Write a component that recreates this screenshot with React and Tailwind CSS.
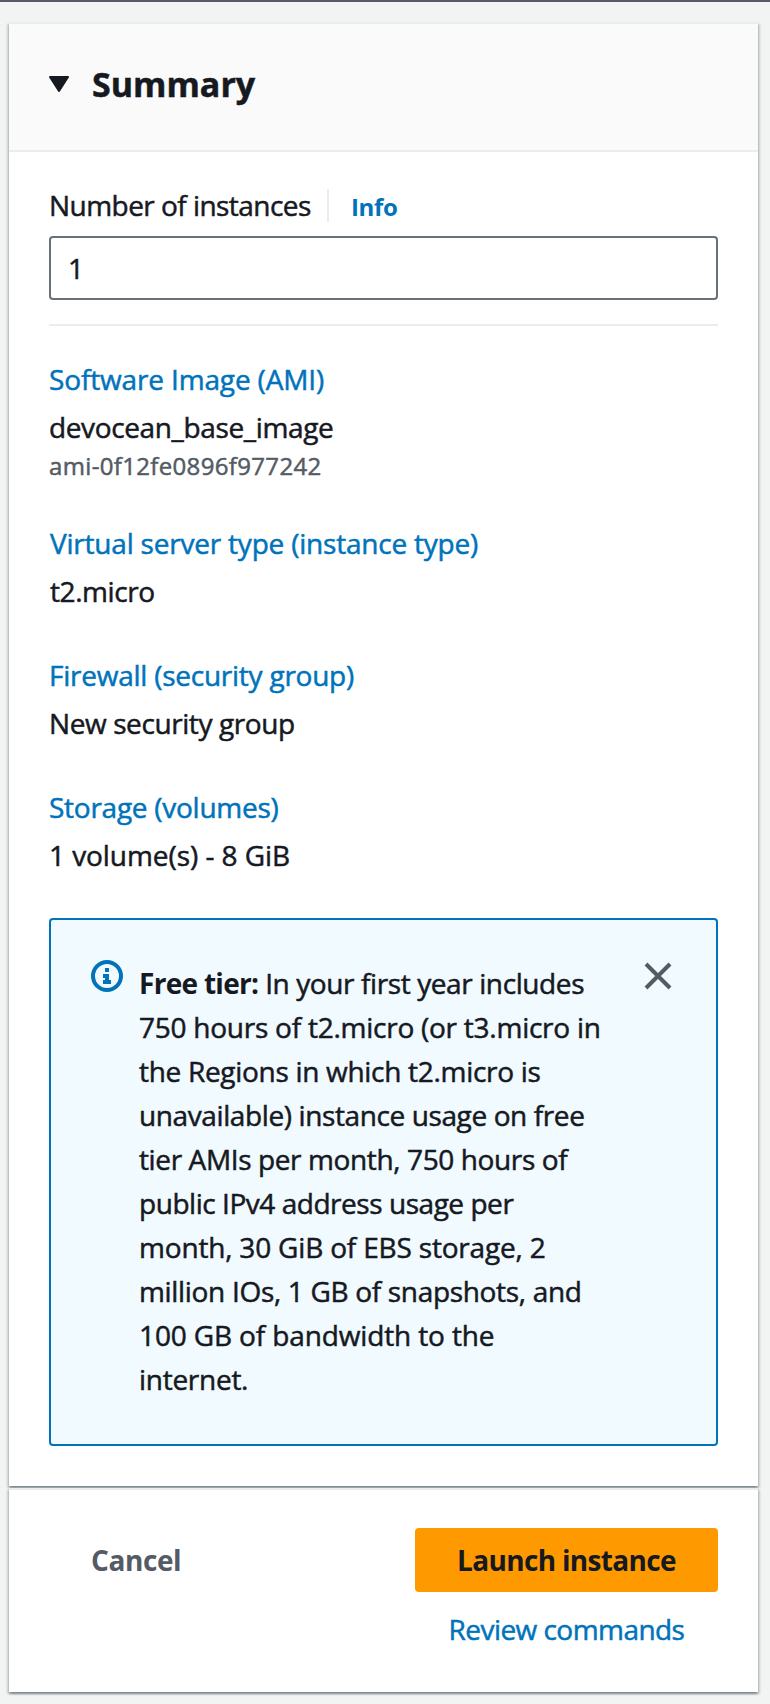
const sections = [
  {
    title: "Software Image (AMI)",
    titleClass: "tracking-[-0.145px]",
    value: "devocean_base_image",
    valueClass: "tracking-[-0.366px]",
    detail: "ami-0f12fe0896f977242",
  },
  {
    title: "Virtual server type (instance type)",
    titleClass: "tracking-[-0.21px] pl-px",
    value: "t2.micro",
    valueClass: "tracking-[-0.42px] pl-px",
  },
  {
    title: "Firewall (security group)",
    titleClass: "tracking-[-0.244px]",
    value: "New security group",
    valueClass: "tracking-[-0.41px]",
  },
  {
    title: "Storage (volumes)",
    titleClass: "tracking-[-0.26px]",
    value: "1 volume(s) - 8 GiB",
    valueClass: "tracking-[-0.062px]",
  },
];

const freeTierLines = [
  ["750 hours of t2.micro (or t3.micro in", "tracking-[-0.245px]"],
  ["the Regions in which t2.micro is", "tracking-[-0.3px]"],
  ["unavailable) instance usage on free", "tracking-[-0.39px]"],
  ["tier AMIs per month, 750 hours of", "tracking-[-0.38px]"],
  ["public IPv4 address usage per", "tracking-[-0.46px]"],
  ["month, 30 GiB of EBS storage, 2", "tracking-[-0.18px]"],
  ["million IOs, 1 GB of snapshots, and", "tracking-[-0.32px]"],
  ["100 GB of bandwidth to the", "tracking-[-0.13px]"],
  ["internet.", "tracking-[-0.27px]"],
];

const cardShadow =
  "shadow-[0_2px_2px_0_rgba(0,28,36,0.3),2px_2px_2px_0_rgba(0,28,36,0.15),-2px_2px_2px_0_rgba(0,28,36,0.15)]";

function InfoIcon() {
  return (
    <svg viewBox="0 0 16 16" className="size-8 shrink-0" fill="none" stroke="#0073bb" strokeWidth="2">
      <circle cx="8" cy="8" r="7" />
      <path d="M8 11V8H6" />
      <path d="M10 11H6" />
      <path d="M8 6V4" />
    </svg>
  );
}

function CloseIcon() {
  return (
    <svg viewBox="0 0 16 16" className="size-8 shrink-0" fill="none" stroke="#545b64" strokeWidth="2">
      <path d="m2 2 12 12M14 2 2 14" />
    </svg>
  );
}

function Summary() {
  return (
    <section className={`border-t-2 border-[#eaeded] bg-white ${cardShadow}`}>
      <header className="flex h-32 items-center gap-[22px] border-b-2 border-[#eaeded] bg-[#fafafa] pb-1 pl-10">
        <svg viewBox="0 0 20 16" className="mb-0.5 h-4 w-5" fill="#16191f" stroke="#16191f" strokeWidth="2" strokeLinejoin="round">
          <path d="M1 1h18l-9 14z" />
        </svg>
        <h2 className="pb-0.5 pl-px text-[34px] leading-[44px] font-bold">Summary</h2>
      </header>

      <div className="px-10 pt-[31px] pb-10">
        <div className="flex h-11 items-baseline leading-[44px] whitespace-nowrap">
          <label className="w-[278px] tracking-[-0.54px]">Number of instances</label>
          <span className="h-[33px] w-0.5 self-center bg-[#eaeded]" />
          <a className="ml-[22px] text-2xl leading-[44px] font-bold tracking-[-0.337px] text-[#0073bb] [-webkit-text-stroke:0px]">Info</a>
        </div>
        <div className="mt-[9px] flex h-16 items-center rounded-[4px] border-2 border-[#687078] px-[17px]">1</div>
        <div className="mt-6 h-0.5 bg-[#eaeded]" />

        <div className="mt-[31px] flex flex-col">
          {sections.map((s) => (
            <div key={s.title} className="mb-10 flex flex-col leading-[44px] whitespace-nowrap last:mb-[41px] first:mb-[38px]">
              <a className={`text-[#0073bb] ${s.titleClass}`}>{s.title}</a>
              <span className={`mt-1 ${s.valueClass}`}>{s.value}</span>
              {s.detail && (
                <span className="text-2xl leading-[34px] tracking-[0.34px] text-[#545b64]">{s.detail}</span>
              )}
            </div>
          ))}
        </div>

        <div className="flex h-[528px] items-start rounded-[4px] border-2 border-[#0073bb] bg-[#f1faff] pt-10 pl-10">
          <InfoIcon />
          <p className="ml-4 w-[503px] pt-px leading-[44px] whitespace-nowrap">
            <span className="block">
              <b className="font-bold tracking-[-0.711px] [-webkit-text-stroke:0px]">Free tier:</b>
              <span className="tracking-[-0.397px]"> In your first year includes</span>
            </span>
            {freeTierLines.map(([text, tracking]) => (
              <span key={text} className={`block ${tracking}`}>{text}</span>
            ))}
          </p>
          <CloseIcon />
        </div>
      </div>
    </section>
  );
}

function Actions() {
  return (
    <section className={`mt-0.5 flex h-[204px] items-start justify-between border-t-2 border-[#eaeded] bg-white px-10 pt-[38px] ${cardShadow}`}>
      <button className="h-16 pl-[42px] font-bold tracking-[-0.419px] text-[#545b64] [-webkit-text-stroke:0px]">Cancel</button>
      <div className="flex w-[303px] flex-col items-center">
        <button className="h-16 w-full rounded-[4px] bg-[#ff9900] font-bold tracking-[-0.667px] [-webkit-text-stroke:0px]">Launch instance</button>
        <a className="mt-[15px] leading-[44px] tracking-[-0.551px] text-[#0073bb]">Review commands</a>
      </div>
    </section>
  );
}

export default function App() {
  return (
    <main className="h-[1704px] w-[770px] overflow-hidden border-t-2 border-[#545b64] bg-[#f2f3f3] pt-5 pr-3 pl-[9px] font-['Open_Sans','Noto_Sans',sans-serif] text-[28px] text-[#16191f] [-webkit-text-stroke:0.5px]">
      <Summary />
      <Actions />
    </main>
  );
}
